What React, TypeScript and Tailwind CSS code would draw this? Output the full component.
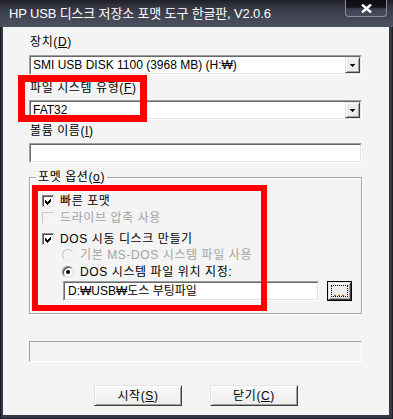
import React from "react";

const font = "font-['Liberation_Sans','Noto_Sans_CJK_KR',sans-serif]";

function U({ children }: { children: React.ReactNode }) {
  return <span className="underline underline-offset-[1px] decoration-[1px]">{children}</span>;
}

function Sunken({ className = "", children }: { className?: string; children?: React.ReactNode }) {
  return (
    <div className={`border border-t-[#a0a0a0] border-l-[#a0a0a0] border-r-white border-b-white ${className}`}>
      <div className="flex h-full w-full items-center border border-t-[#696969] border-l-[#696969] border-r-[#e3e3e3] border-b-[#e3e3e3] bg-white">
        {children}
      </div>
    </div>
  );
}

const raised =
  "border border-t-[#e3e3e3] border-l-[#e3e3e3] border-r-[#404040] border-b-[#404040] shadow-[inset_1px_1px_0_#ffffff,inset_-1px_-1px_0_#a0a0a0]";

function Combo({ text }: { text: string }) {
  return (
    <Sunken className="h-[20px] w-[333px]">
      <span className="flex-1 overflow-hidden whitespace-nowrap pl-[2px] text-[12px] leading-[14px] tracking-normal text-black">{text}</span>
      <div className={`flex h-full w-[15px] items-center justify-center bg-[#ececec] ${raised}`}>
        <svg width="5" height="3" viewBox="0 0 5 3" shapeRendering="crispEdges">
          <path d="M0 0h5v1h-1v1h-1v1h-1v-1h-1v-1h-1z" fill="#000" />
        </svg>
      </div>
    </Sunken>
  );
}

function Check({ checked, disabled }: { checked?: boolean; disabled?: boolean }) {
  return (
    <div
      className={`flex h-[12px] w-[12px] items-center justify-center border ${
        disabled
          ? "border-t-[#c8c8c8] border-l-[#c8c8c8] border-r-[#f8f8f8] border-b-[#f8f8f8] bg-[#f4f4f4]"
          : "border-t-[#8a8a8a] border-l-[#8a8a8a] border-r-[#e6e6e6] border-b-[#e6e6e6] bg-white shadow-[inset_1px_1px_0_#505050]"
      }`}
    >
      {checked && (
        <svg width="8" height="8" viewBox="0 0 8 8" shapeRendering="crispEdges">
          <path d="M1 3h1v1h1v1h1v-1h1v-1h1v-1h1v3h-1v1h-1v1h-1v1h-1v-1h-1v-1h-1z" fill="#000" />
        </svg>
      )}
    </div>
  );
}

function Radio({ checked, disabled }: { checked?: boolean; disabled?: boolean }) {
  return (
    <div
      className={`flex h-[12px] w-[12px] items-center justify-center rounded-full border ${
        disabled
          ? "border-t-[#c0c0c0] border-l-[#c0c0c0] border-r-[#ececec] border-b-[#ececec] bg-[#f4f4f4]"
          : "border-t-[#7a7a7a] border-l-[#7a7a7a] border-r-[#dcdcdc] border-b-[#dcdcdc] bg-white shadow-[inset_1px_1px_0_#505050]"
      }`}
    >
      {checked && <div className="h-[4px] w-[4px] rounded-full bg-black" />}
    </div>
  );
}

function Row({ children, className = "" }: { children: React.ReactNode; className?: string }) {
  return <div className={`flex h-[14px] items-center text-[12px] leading-[14px] ${className}`}>{children}</div>;
}

export default function App() {
  return (
    <div className={`${font} flex h-[419px] w-[393px] flex-col bg-[#353846] pb-[4px] pl-[3px] pr-[4px] shadow-[inset_1px_0_0_#1c1d26,inset_-1px_0_0_#1c1d26,inset_0_-1px_0_#1c1d26]`}>
      {/* title bar */}
      <div className="-ml-[3px] -mr-[4px] flex h-[27px] items-start rounded-t-[4px] bg-[linear-gradient(to_bottom,#1e1f27_0%,#343642_25%,#454856_70%,#4d505e_100%)]">
        <span className="self-center whitespace-nowrap pl-[9px] text-[13px] leading-[16px] tracking-[-0.15px] text-white">
          HP USB 디스크 저장소 포맷 도구 한글판, V2.0.6
        </span>
        <div className="ml-auto mr-[6px] flex h-[17px] w-[42px] items-center justify-center rounded-b-[4px] border border-t-0 border-[#8c8e9c] bg-[linear-gradient(to_bottom,#0c0c10_0%,#14151a_45%,#3e4050_55%,#4a4c5c_100%)]">
          <svg width="11" height="9" viewBox="0 0 11 9">
            <path d="M1 0.5 L10 8.5 M10 0.5 L1 8.5" stroke="#fff" strokeWidth="2.4" />
          </svg>
        </div>
      </div>

      {/* client area */}
      <div className="relative flex flex-1 flex-col bg-[#f4f4f4] pl-[26px] tracking-[0.6px] text-black">
        <div className="mt-[8px] pl-[1px] text-[12px] leading-[14px]">
          장치(<U>D</U>)
        </div>
        <div className="mt-[6px]">
          <Combo text="SMI USB DISK 1100 (3968 MB) (H:₩)" />
        </div>
        <div className="mt-[6px] pl-[1px] text-[12px] leading-[14px]">
          파일 시스템 유형(<U>F</U>)
        </div>
        <div className="mt-[5px]">
          <Combo text="FAT32" />
        </div>
        <div className="mt-[4px] pl-[1px] text-[12px] leading-[14px]">
          볼륨 이름(<U>I</U>)
        </div>
        <div className="mt-[5px]">
          <Sunken className="h-[20px] w-[333px]" />
        </div>

        <fieldset className="mt-[7px] w-[333px] border border-[#a7a7a7] pb-[12px] shadow-[inset_1px_1px_0_#ffffff,1px_1px_0_#ffffff]">
          <legend className="ml-[6px] px-[2px] text-[12px] leading-[14px]">
            포멧 옵션(<U>o</U>)
          </legend>
          <div className="flex flex-col pl-[12px] pt-[10px]">
            <Row>
              <Check checked />
              <span className="ml-[6px]">빠른 포맷</span>
            </Row>
            <Row className="mt-[3px] text-[#a3a3a3]">
              <Check disabled />
              <span className="ml-[6px]">드라이브 압축 사용</span>
            </Row>
            <Row className="mt-[7px]">
              <Check checked />
              <span className="ml-[6px]">DOS 시동 디스크 만들기</span>
            </Row>
            <Row className="mt-[2px] pl-[20px] text-[#a3a3a3]">
              <Radio disabled />
              <span className="ml-[6px]">기본 MS-DOS 시스템 파일 사용</span>
            </Row>
            <Row className="mt-[3px] pl-[20px]">
              <Radio checked />
              <span className="ml-[6px]">DOS 시스템 파일 위치 지정:</span>
            </Row>
            <div className="mt-[2px] flex items-center pl-[21px]">
              <Sunken className="h-[20px] w-[256px]">
                <span className="whitespace-nowrap pl-[3px] text-[12px] leading-[14px] tracking-normal">D:₩USB₩도스 부팅파일</span>
              </Sunken>
              <div className="ml-[8px] h-[20px] w-[25px] border border-black">
                <div className={`flex h-full w-full items-center justify-center bg-[#ececec] ${raised}`}>
                  <div className="flex h-[12px] w-[17px] items-end justify-center border border-dotted border-black">
                    <span className="text-[11px] leading-[8px] tracking-[1px]">...</span>
                  </div>
                </div>
              </div>
            </div>
          </div>
        </fieldset>

        <div className="mt-[27px] h-[21px] w-[333px] border border-t-[#a0a0a0] border-l-[#a0a0a0] border-r-white border-b-white" />

        <div className="-ml-[26px] mt-[23px] flex justify-center gap-[28px]">
          <button className={`h-[21px] w-[88px] bg-[linear-gradient(to_bottom,#f8f8f8,#ececec)] text-[12px] leading-[14px] ${raised}`}>
            시작(<U>S</U>)
          </button>
          <button className={`h-[21px] w-[88px] bg-[linear-gradient(to_bottom,#f8f8f8,#ececec)] text-[12px] leading-[14px] ${raised}`}>
            닫기(<U>C</U>)
          </button>
        </div>

        {/* red highlight boxes */}
        <div className="pointer-events-none absolute left-[15px] top-[48px] h-[47px] w-[129px] border-[7px] border-[#ff0000]" />
        <div className="pointer-events-none absolute left-[29px] top-[158px] h-[126px] w-[235px] border-[6px] border-[#ff0000]" />
      </div>
    </div>
  );
}
